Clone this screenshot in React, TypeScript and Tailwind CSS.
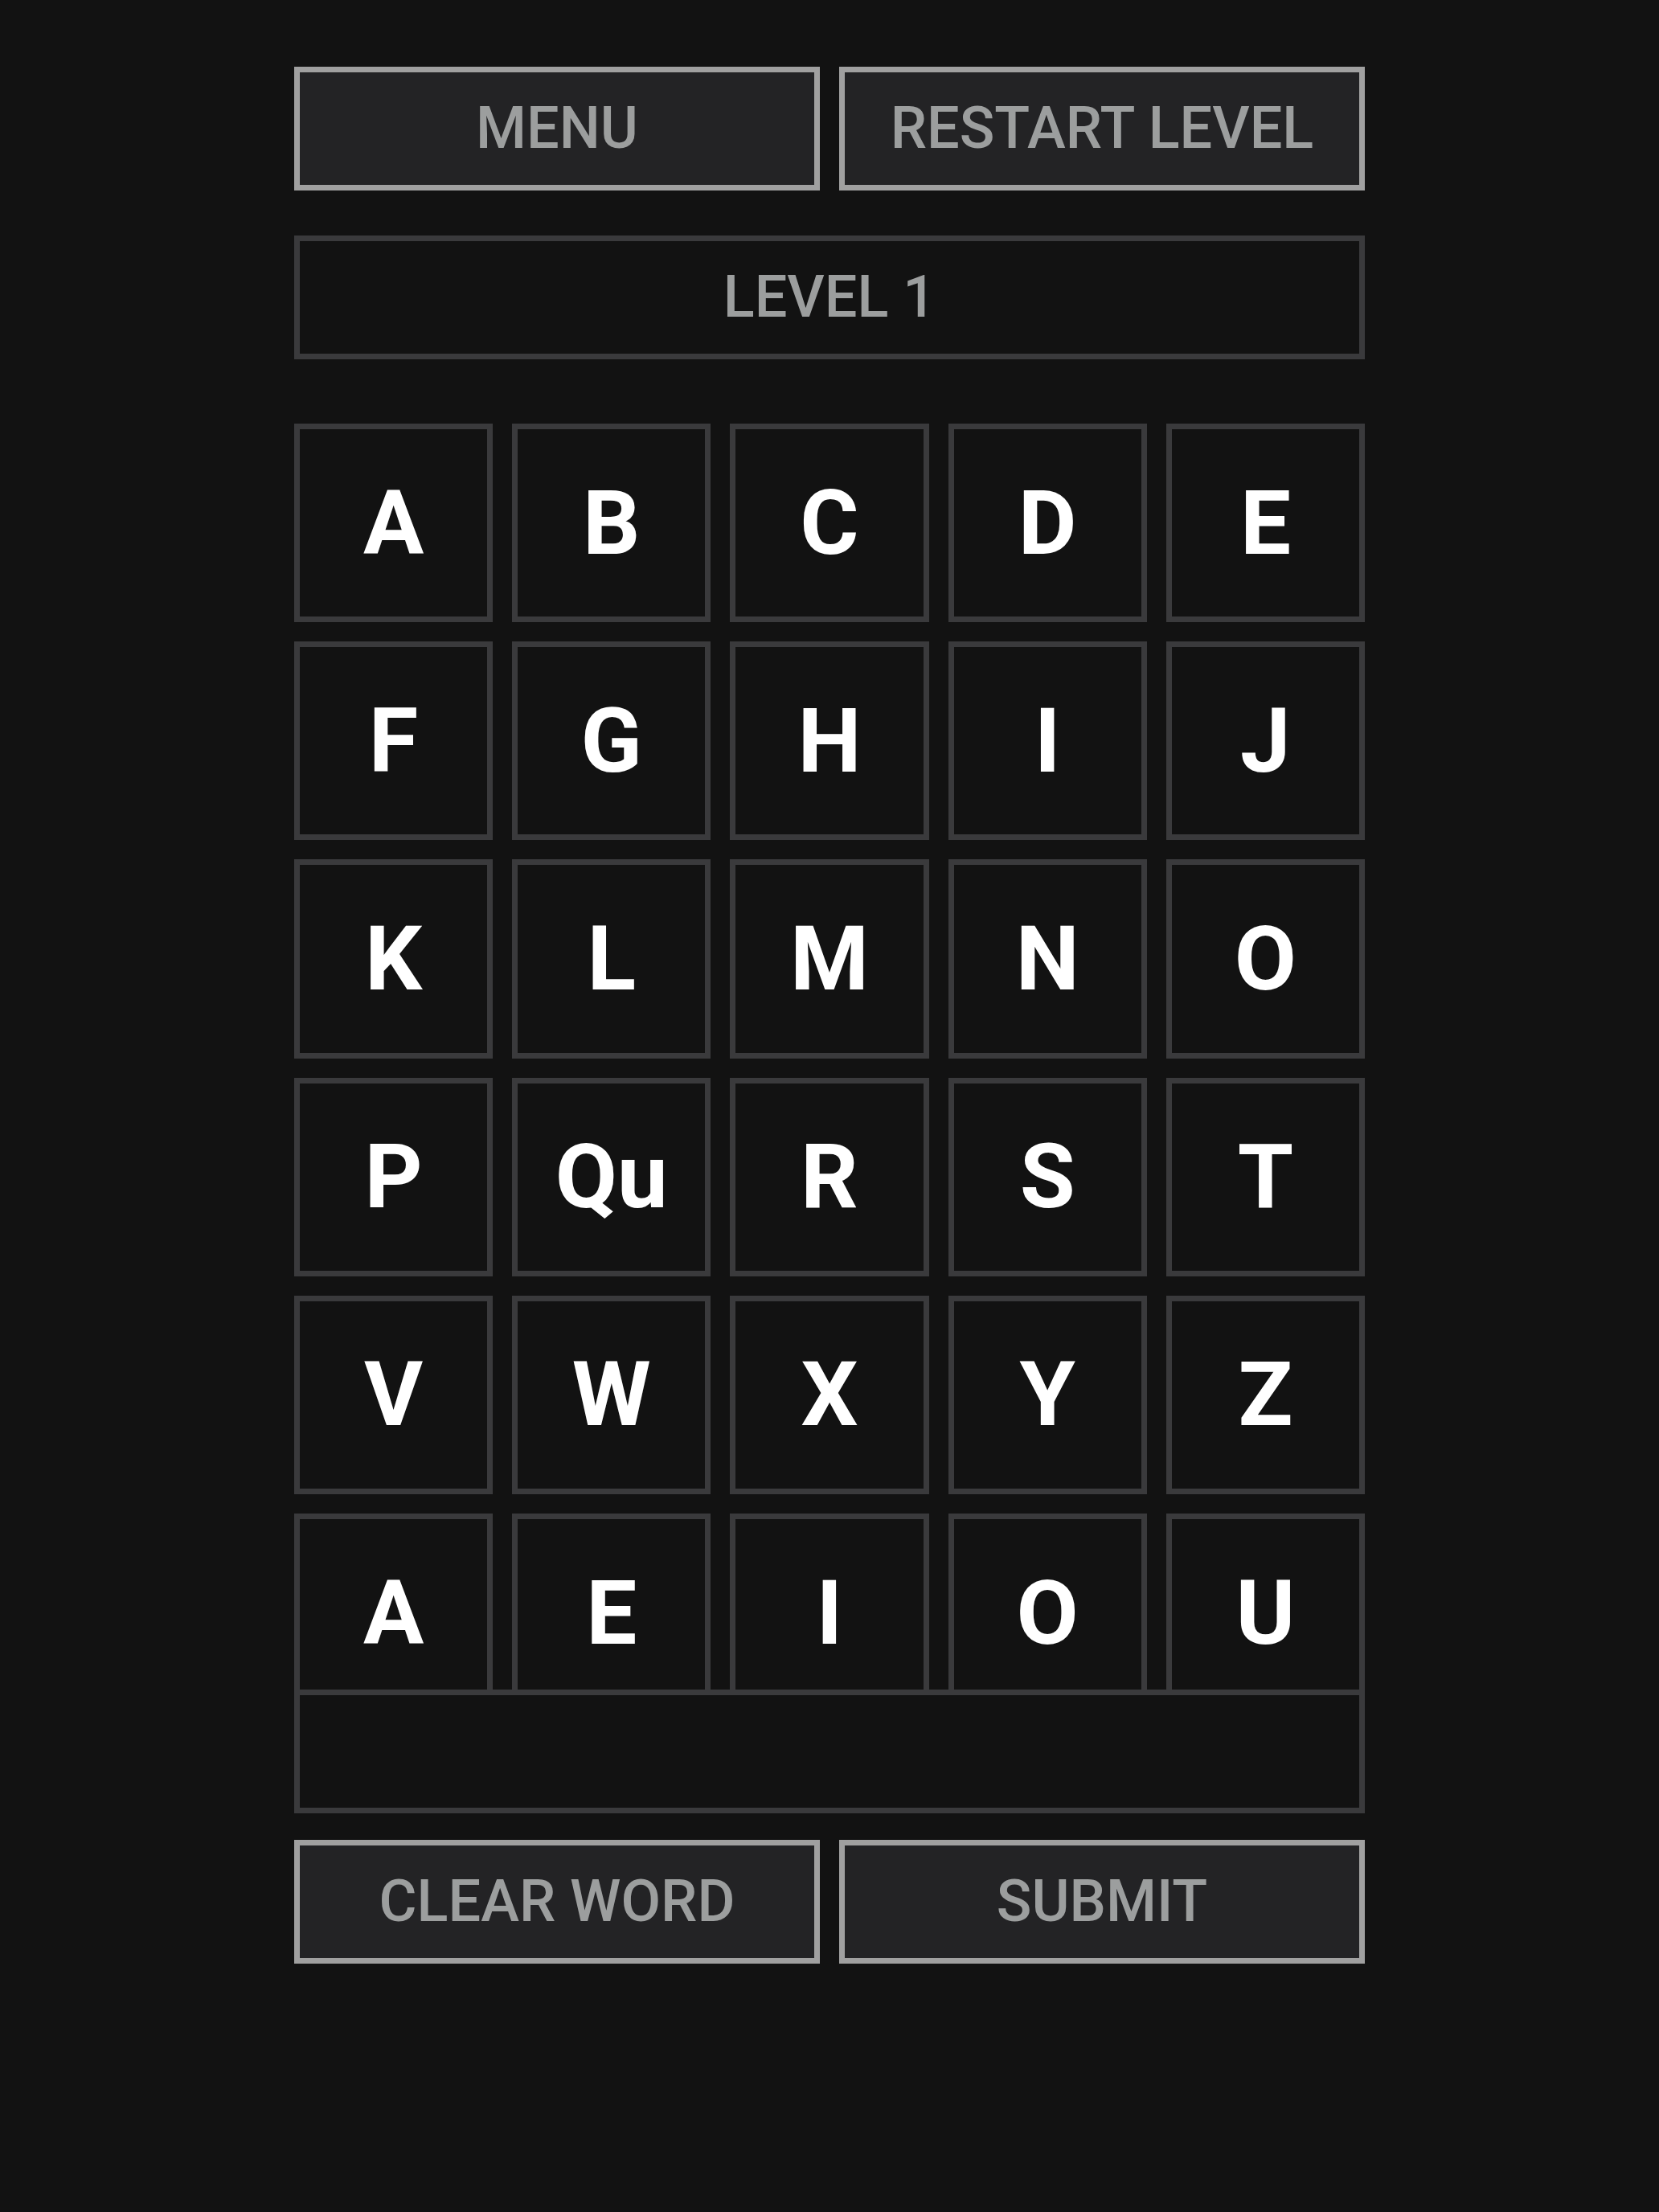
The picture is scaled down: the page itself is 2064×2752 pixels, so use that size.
import React from "react";

const rows = [
  ["A", "B", "C", "D", "E"],
  ["F", "G", "H", "I", "J"],
  ["K", "L", "M", "N", "O"],
  ["P", "Qu", "R", "S", "T"],
  ["V", "W", "X", "Y", "Z"],
  ["A", "E", "I", "O", "U"],
];

const GameButton = ({ label }: { label: string }) => (
  <button className="h-[154px] flex-1 border-[7px] border-[#a0a0a0] bg-[#232325] text-[72px] font-medium leading-none text-[#9c9e9e] flex items-center justify-center">
    {label}
  </button>
);

export default function App() {
  return (
    <div className="min-h-screen bg-[#121212] font-['Roboto','Liberation_Sans',sans-serif]">
      <div className="mx-auto w-[1332px] pt-[83px] pb-[120px]">
        {/* top controls */}
        <div className="flex gap-[24px]">
          <GameButton label="MENU" />
          <GameButton label="RESTART LEVEL" />
        </div>

        {/* level indicator */}
        <div className="mt-[56px] h-[154px] border-[7px] border-[#3a3a3c] bg-[#121212] flex items-center justify-center text-[72px] font-medium leading-none text-[#9c9e9e]">
          LEVEL 1
        </div>

        {/* letter grid */}
        <div className="mt-[80px] grid grid-cols-5 gap-[24px]">
          {rows.flat().map((letter, i) => (
            <div
              key={i}
              className="aspect-square border-[7px] border-[#3a3a3c] bg-[#121212] flex items-center justify-center text-[112px] font-bold leading-none text-white"
            >
              {letter}
            </div>
          ))}
        </div>

        {/* current word, sits over the last row */}
        <div className="relative z-10 -mt-[28px] h-[154px] border-[7px] border-[#3a3a3c] bg-[#121212]" />

        {/* bottom controls */}
        <div className="mt-[33px] flex gap-[24px]">
          <GameButton label="CLEAR WORD" />
          <GameButton label="SUBMIT" />
        </div>
      </div>
    </div>
  );
}
